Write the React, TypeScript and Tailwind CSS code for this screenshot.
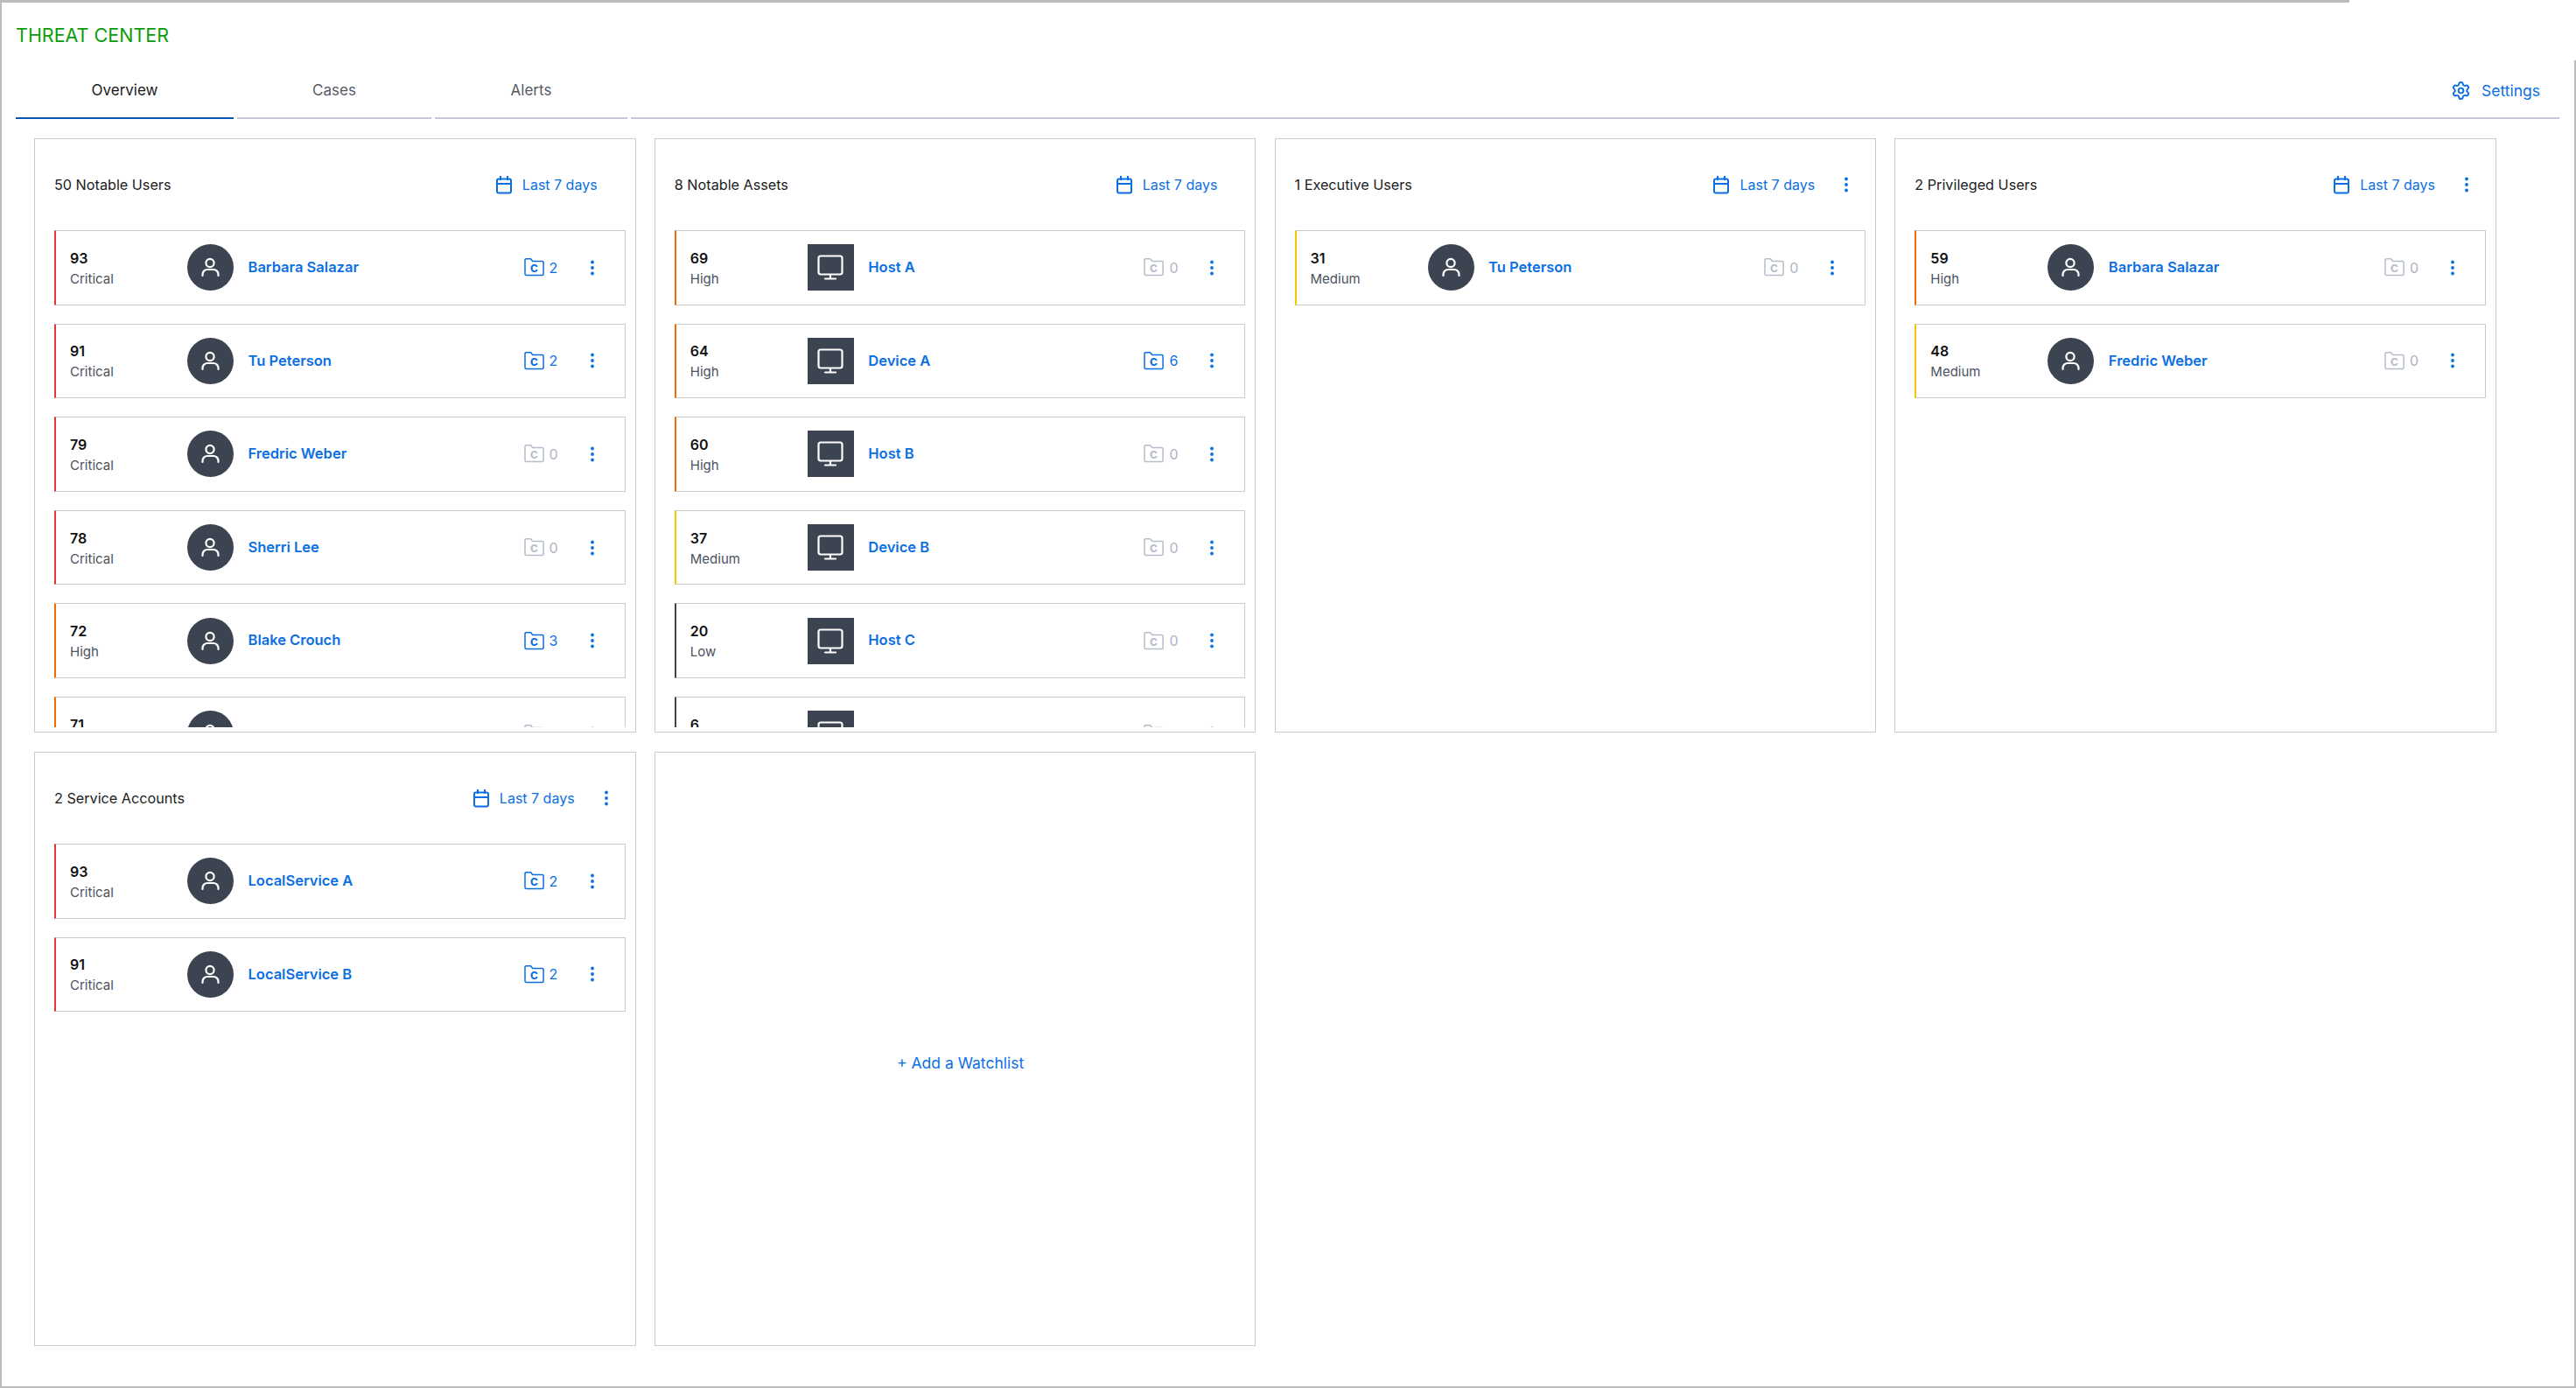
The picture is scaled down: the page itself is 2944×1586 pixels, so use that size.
import React from "react";
import { Settings } from "lucide-react";

type Row = { score: number; level: string; name: string; cases: number };

const levelBorder: Record<string, string> = {
  Critical: "border-l-[#e2383b]",
  High: "border-l-[#f56a00]",
  Medium: "border-l-[#f7c600]",
  Low: "border-l-[#3d4451]",
};

const notableUsers: Row[] = [
  { score: 93, level: "Critical", name: "Barbara Salazar", cases: 2 },
  { score: 91, level: "Critical", name: "Tu Peterson", cases: 2 },
  { score: 79, level: "Critical", name: "Fredric Weber", cases: 0 },
  { score: 78, level: "Critical", name: "Sherri Lee", cases: 0 },
  { score: 72, level: "High", name: "Blake Crouch", cases: 3 },
  { score: 71, level: "High", name: "", cases: 0 },
];

const notableAssets: Row[] = [
  { score: 69, level: "High", name: "Host A", cases: 0 },
  { score: 64, level: "High", name: "Device A", cases: 6 },
  { score: 60, level: "High", name: "Host B", cases: 0 },
  { score: 37, level: "Medium", name: "Device B", cases: 0 },
  { score: 20, level: "Low", name: "Host C", cases: 0 },
  { score: 6, level: "Low", name: "", cases: 0 },
];

const executiveUsers: Row[] = [{ score: 31, level: "Medium", name: "Tu Peterson", cases: 0 }];

const privilegedUsers: Row[] = [
  { score: 59, level: "High", name: "Barbara Salazar", cases: 0 },
  { score: 48, level: "Medium", name: "Fredric Weber", cases: 0 },
];

const serviceAccounts: Row[] = [
  { score: 93, level: "Critical", name: "LocalService A", cases: 2 },
  { score: 91, level: "Critical", name: "LocalService B", cases: 2 },
];

function Kebab() {
  return (
    <svg width="14" height="20" viewBox="0 0 14 20" className="text-[#0b6fe3] shrink-0">
      <circle cx="7" cy="3.5" r="1.9" fill="currentColor" />
      <circle cx="7" cy="10" r="1.9" fill="currentColor" />
      <circle cx="7" cy="16.5" r="1.9" fill="currentColor" />
    </svg>
  );
}

function CalendarIcon() {
  return (
    <svg width="20" height="22" viewBox="0 0 20 22" fill="none" stroke="#0b6fe3" strokeWidth="2" className="shrink-0">
      <rect x="2" y="4.5" width="16" height="16" rx="2" />
      <path d="M2 10h16M6 1v5M14 1v5" />
    </svg>
  );
}

function FolderIcon({ active }: { active: boolean }) {
  const color = active ? "#0b6fe3" : "#b7bdcc";
  return (
    <svg width="23" height="21" viewBox="0 0 23 21" fill="none" className="shrink-0">
      <path
        d="M1 2a1.2 1.2 0 0 1 1.2-1.2h5.3l2.2 2.7h10.9a1.5 1.5 0 0 1 1.5 1.5v13a1.5 1.5 0 0 1-1.5 1.5h-18.1a1.5 1.5 0 0 1-1.5-1.5z"
        stroke={color}
        strokeWidth="1.5"
        strokeLinejoin="round"
      />
      <text x="11.5" y="16" textAnchor="middle" fontSize="16" fontWeight="600" fill={color} fontFamily="Inter, sans-serif">
        c
      </text>
    </svg>
  );
}

function PersonIcon() {
  return (
    <svg width="53" height="53" viewBox="0 0 53 53" fill="none" stroke="#fff" strokeWidth="2.2" strokeLinecap="round">
      <circle cx="26" cy="21.5" r="4.6" />
      <path d="M17.5 36v-1.5a5.5 5.5 0 0 1 5.5-5.5h7a5.5 5.5 0 0 1 5.5 5.5V36" />
    </svg>
  );
}

function MonitorIcon() {
  return (
    <svg width="53" height="53" viewBox="0 0 53 53" fill="none" stroke="#fff" strokeWidth="2.2" strokeLinecap="round" strokeLinejoin="round">
      <rect x="12.5" y="13.5" width="27" height="21" rx="2.5" />
      <path d="M26 35v4M20 39.5h12" />
    </svg>
  );
}

function EntityRow({ row, asset }: { row: Row; asset: boolean }) {
  const active = row.cases > 0;
  return (
    <div className={`flex items-center h-[85.6px] shrink-0 bg-white border border-[#cbcbcb] border-l-2 pl-[16px] pr-[12px] ${levelBorder[row.level]}`}>
      <div className="w-[134px] shrink-0 pt-[2px]">
        <div className="text-[16px] leading-[24px] font-semibold text-[#111]">{row.score}</div>
        <div className="text-[15px] leading-[24px] text-[#4b5260]">{row.level}</div>
      </div>
      <div className={`w-[53px] h-[53px] shrink-0 bg-[#3d4451] ${asset ? "" : "rounded-full"}`}>
        {asset ? <MonitorIcon /> : <PersonIcon />}
      </div>
      <div className="flex-1 ml-[16.5px] pb-[1px] text-[16.5px] font-semibold text-[#0b6fe3] truncate">{row.name}</div>
      <FolderIcon active={active} />
      <div className={`w-[42px] ml-[6px] text-[16px] ${active ? "text-[#0b6fe3]" : "text-[#aeb4c3]"}`}>{row.cases}</div>
      <Kebab />
      <div className="w-[18px] shrink-0" />
    </div>
  );
}

function Panel({ title, rows, menu, asset = false }: { title: string; rows: Row[]; menu?: boolean; asset?: boolean }) {
  return (
    <div className="flex flex-col h-[679px] border border-[#cbcbcb] bg-white pb-[5px]">
      <div className={`flex items-center h-[104px] shrink-0 pl-[22px] ${menu ? "pr-[26px]" : "pr-[43px]"}`}>
        <div className="flex-1 text-[16.2px] text-[#1c1c1c]">{title}</div>
        <CalendarIcon />
        <div className="ml-[11px] text-[16px] text-[#0b6fe3]">Last 7 days</div>
        {menu && (
          <div className="ml-[29px]">
            <Kebab />
          </div>
        )}
      </div>
      <div className="flex flex-col gap-[21px] flex-1 overflow-hidden pl-[22px] pr-[11px]">
        {rows.map((r) => (
          <EntityRow key={r.score} row={r} asset={asset} />
        ))}
      </div>
    </div>
  );
}

export default function App() {
  return (
    <div className="flex flex-col w-[2944px] h-[1586px] bg-white border-l-2 border-b-2 border-[#bcbcbc] font-['Inter',sans-serif] overflow-hidden">
      <div className="w-[2683px] h-[3px] shrink-0 bg-[#bcbcbc]" />
      <div className="flex flex-1">
        <div className="flex-1 min-w-0 pl-[16px] pr-[17px]">
          <div className="h-[69px] pt-[23px] text-[21.5px] leading-[28px] text-[#0a9c0a]">THREAT CENTER</div>

          <div className="flex gap-[4px] h-[64px]">
            <div className="w-[249px] flex items-center justify-center pt-[2px] border-b-2 border-[#0057b8] text-[17px] text-[#1a1a1a]">Overview</div>
            <div className="w-[222px] flex items-center justify-center pt-[2px] border-b-2 border-[#c3c6d4] text-[17px] text-[#555b66]">Cases</div>
            <div className="w-[220px] flex items-center justify-center pt-[2px] border-b-2 border-[#c3c6d4] text-[17px] text-[#555b66]">Alerts</div>
            <div className="flex-1 flex items-center justify-end gap-[12px] pr-[22px] border-b-2 border-[#c3c6d4] text-[17.5px] text-[#0b6fe3]">
              <Settings size={23} strokeWidth={2} />
              <span className="pt-[2px]">Settings</span>
            </div>
          </div>

          <div className="grid grid-cols-[687.6px_687.6px_687.6px_687.6px] auto-rows-[679px] gap-x-[21.2px] gap-y-[22px] mt-[22px] ml-[21px]">
            <Panel title="50 Notable Users" rows={notableUsers} />
            <Panel title="8 Notable Assets" rows={notableAssets} asset />
            <Panel title="1 Executive Users" rows={executiveUsers} menu />
            <Panel title="2 Privileged Users" rows={privilegedUsers} menu />
            <Panel title="2 Service Accounts" rows={serviceAccounts} menu />
            <div className="flex items-center justify-center h-[679px] border border-[#cbcbcb] pt-[34px] pl-[12px] text-[17.5px] text-[#0b6fe3]">
              + Add a Watchlist
            </div>
          </div>
        </div>
        <div className="flex flex-col w-[2px] shrink-0">
          <div className="h-[66px] shrink-0" />
          <div className="flex-1 bg-[#bcbcbc]" />
        </div>
      </div>
    </div>
  );
}
